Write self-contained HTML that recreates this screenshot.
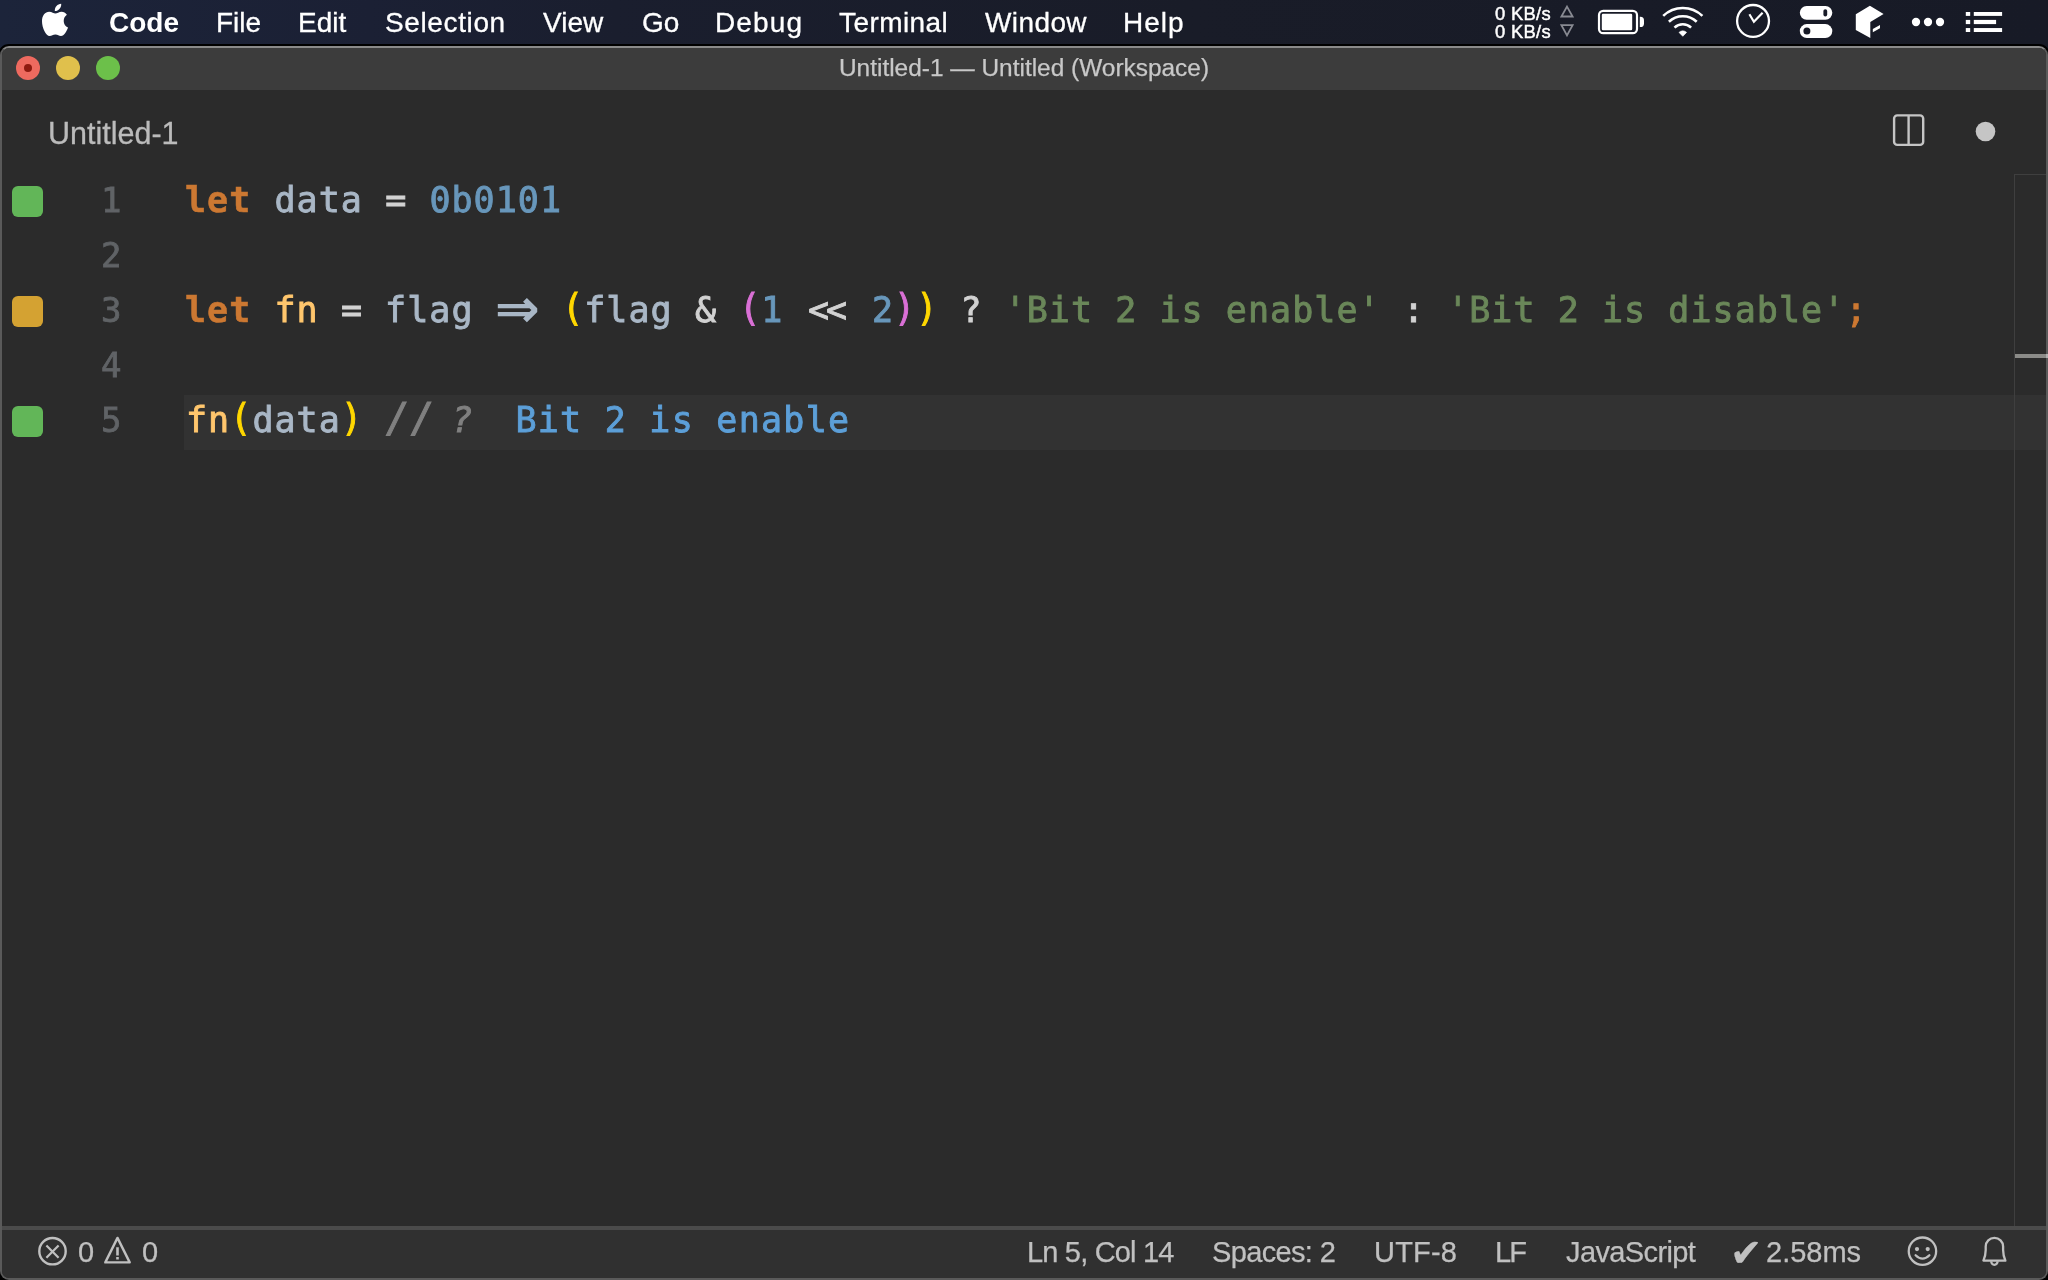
<!DOCTYPE html>
<html lang="en">
<head>
<meta charset="utf-8">
<title>Untitled-1 — Untitled (Workspace)</title>
<style>
html,body{margin:0;padding:0;}
.abs,.mi,.net,#title,#tab,.code,.ln,.st{will-change:transform;}
body{width:2048px;height:1280px;background:#000;overflow:hidden;position:relative;font-family:"Liberation Sans",sans-serif;}
.abs{position:absolute;white-space:nowrap;}
/* ---------- macOS menu bar ---------- */
#menubar{position:absolute;left:0;top:0;width:2048px;height:56px;background:linear-gradient(90deg,#1c243a 0%,#1b2034 18%,#1a1e2e 30%,#191c28 58%,#171a26 100%);}
.mi{position:absolute;top:0;height:44px;line-height:45px;-webkit-text-stroke:0.3px;font-size:28px;color:#fff;white-space:nowrap;}
.mi b{font-weight:700;-webkit-text-stroke:0;}
.net{position:absolute;font-size:18.4px;color:#fff;white-space:nowrap;line-height:20px;letter-spacing:0.3px;-webkit-text-stroke:0.45px;}
/* ---------- window ---------- */
#win{position:absolute;left:0;top:46px;width:2048px;height:1234px;box-sizing:border-box;border:2px solid #5a5a5a;border-top-color:#8a8a8a;border-bottom-color:#5a5a5a;border-radius:9px;background:#2b2b2b;overflow:hidden;box-shadow:0 0 0 2px #000;}
#titlebar{position:absolute;left:0;top:0;width:2044px;height:42px;background:#3c3c3c;}
#statusline{position:absolute;left:0;top:1178px;width:2044px;height:4px;background:#4b4b4b;}
#statusbar{position:absolute;left:0;top:1182px;width:2044px;height:48px;background:#303030;}
.tl{position:absolute;width:24.6px;height:24.6px;border-radius:50%;top:55.6px;}
#title{position:absolute;left:0;top:48px;width:2048px;height:42px;line-height:39px;text-align:center;font-size:24.43px;color:#c8c8c8;-webkit-text-stroke:0.25px;}
#tab{position:absolute;left:48px;top:111px;height:44px;line-height:44px;font-size:30.5px;color:#bbbbbb;-webkit-text-stroke:0.3px;}
/* ---------- editor ---------- */
#hl{position:absolute;left:184px;top:394.5px;width:1862px;height:55.5px;background:#323232;}
#ruler{position:absolute;left:2014px;top:174px;width:32px;height:1052px;border-left:1px solid #3f3f3f;border-top:1px solid #3f3f3f;box-sizing:border-box;}
#rulermark{position:absolute;left:2015px;top:354px;width:31px;height:4px;background:#8b8b88;border-right:2px solid #b0b0b0;}
.sq{position:absolute;left:12px;width:31px;height:31px;border-radius:6px;}
.code{position:absolute;left:185.5px;height:55px;line-height:55px;font-family:"DejaVu Sans Mono","Liberation Mono",monospace;font-size:35px;letter-spacing:1.053px;white-space:pre;color:#a9b7c6;-webkit-text-stroke:0.9px;}
.ln{position:absolute;left:55px;width:66.5px;text-align:right;height:55px;line-height:55px;font-family:"DejaVu Sans Mono","Liberation Mono",monospace;font-size:34px;color:#606366;-webkit-text-stroke:0.8px;}
.kw{color:#cc7832;font-weight:700;-webkit-text-stroke:0.5px;margin-left:-1px;margin-right:1px;}
.fn{color:#ffc66d;}
.op{color:#d2d2d2;}
.num{color:#6897bb;}
.str{color:#6a8759;}
.b1{color:#ffd700;}
.b2{color:#da70d6;}
.b1,.b2{display:inline-block;transform:scaleY(1.09);transform-origin:0 56px;}
.cm{color:#808080;font-style:italic;}
.qk{color:#5c9fd8;margin-left:-2.5px;letter-spacing:1.26px;}
.semi{color:#cc7832;}
.sl{display:inline-block;transform:translateX(1px) scale(1.117,1.16);transform-origin:0 36.75px;}
.lig{display:inline-block;width:44.25px;letter-spacing:0;font-family:"DejaVu Sans",sans-serif;font-weight:700;font-size:53.8px;line-height:0;position:relative;top:5px;left:-1px;-webkit-text-stroke:0;}
.shl{display:inline-block;box-sizing:border-box;width:44.25px;padding-left:2.5px;letter-spacing:-3px;}
/* ---------- status bar ---------- */
.st{position:absolute;top:1229px;height:48px;line-height:46px;font-size:29px;color:#c0c0c0;white-space:nowrap;-webkit-text-stroke:0.25px;}
</style>
</head>
<body>

<!-- ======= menu bar ======= -->
<div id="menubar"></div>
<div class="mi" style="left:109px"><b>Code</b></div>
<div class="mi" style="left:216px">File</div>
<div class="mi" style="left:297.5px">Edit</div>
<div class="mi" style="left:384.5px;letter-spacing:0.62px">Selection</div>
<div class="mi" style="left:543px">View</div>
<div class="mi" style="left:642px">Go</div>
<div class="mi" style="left:715px;letter-spacing:1.15px">Debug</div>
<div class="mi" style="left:839px;letter-spacing:0.43px">Terminal</div>
<div class="mi" style="left:985px;letter-spacing:0.4px">Window</div>
<div class="mi" style="left:1123px;letter-spacing:1px">Help</div>

<div class="net" style="left:1495px;top:4px">0 KB/s</div>
<div class="net" style="left:1495px;top:22px">0 KB/s</div>

<!-- ======= window ======= -->
<div id="win">
  <div id="titlebar"></div>
  <div id="statusline"></div>
  <div id="statusbar"></div>
</div>
<div class="tl" style="left:15.6px;background:#ee6a5f"></div>
<div class="tl" style="left:55.7px;background:#e0c04c"></div>
<div class="tl" style="left:95.8px;background:#6cc04a"></div>
<div class="abs" style="left:24px;top:64px;width:8px;height:8px;border-radius:50%;background:#8e1a10"></div>
<div id="title">Untitled-1 — Untitled (Workspace)</div>
<div id="tab">Untitled-1</div>

<!-- ======= editor ======= -->
<div id="hl"></div>
<div id="ruler"></div>
<div id="rulermark"></div>

<div class="sq" style="top:186px;background:#62b658"></div>
<div class="sq" style="top:296px;background:#d4a232"></div>
<div class="sq" style="top:406px;background:#62b658"></div>

<div class="ln" style="top:172.7px">1</div>
<div class="ln" style="top:227.7px">2</div>
<div class="ln" style="top:282.7px">3</div>
<div class="ln" style="top:337.7px">4</div>
<div class="ln" style="top:392.7px">5</div>

<div class="code" style="top:172.7px"><span class="kw">let</span> data <span class="op">=</span> <span class="num">0b0101</span></div>
<div class="code" style="top:282.7px"><span class="kw">let</span> <span class="fn">fn</span> <span class="op">=</span> flag <span class="lig">⇒</span> <span class="b1">(</span>flag <span class="op">&amp;</span> <span class="b2">(</span><span class="num">1</span> <span class="op shl">&lt;&lt;</span> <span class="num">2</span><span class="b2">)</span><span class="b1">)</span> <span class="op">?</span> <span class="str">'Bit 2 is enable'</span> <span class="op">:</span> <span class="str">'Bit 2 is disable'</span><span class="semi">;</span></div>
<div class="code" style="top:392.7px"><span class="fn">fn</span><span class="b1">(</span>data<span class="b1">)</span> <span class="cm"><span class="sl">//</span> ?</span>  <span class="qk">Bit 2 is enable</span></div>

<!-- ======= status bar ======= -->
<div class="st" style="left:78px">0</div>
<div class="st" style="left:142px">0</div>
<div class="st" style="left:1027px;letter-spacing:-0.82px">Ln 5, Col 14</div>
<div class="st" style="left:1211.5px;letter-spacing:-0.65px">Spaces: 2</div>
<div class="st" style="left:1374px;letter-spacing:0.2px">UTF-8</div>
<div class="st" style="left:1494.500px;letter-spacing:-2px">LF</div>
<div class="st" style="left:1565.500px;letter-spacing:-0.62px">JavaScript</div>
<div class="st" style="left:1730.1px;top:1229.7px;font-size:38.5px;font-family:'DejaVu Sans',sans-serif">✔</div>
<div class="st" style="left:1765.500px">2.58ms</div>


<!-- ======= icon overlay (page coordinates) ======= -->
<svg class="abs" style="left:0;top:0" width="2048" height="1280" viewBox="0 0 2048 1280">
 <!-- apple -->
 <g transform="translate(42 3.6)" fill="#fff">
  <path d="M13.4 9.9C11.8 9.9 9.8 8.1 7.2 8.1C3.2 8.1 0 11.8 0 17.7C0 24.5 4.2 32.5 7.6 32.5C9.8 32.5 10.8 30.9 13.4 30.9C16 30.9 16.7 32.5 19 32.5C22 32.5 25.2 26.8 26 23.9C23.3 22.8 21.7 20.3 21.7 17.4C21.7 14.8 23 12.5 24.9 11.2C23.6 9.3 21.6 8.1 19.6 8.1C17 8.1 15 9.9 13.4 9.9Z"/>
  <path d="M12.8 7.5C12.5 3.5 15.5 0.3 19.2 0.1C19.6 3.9 16.6 7.4 12.8 7.5Z"/>
 </g>
 <!-- net triangles -->
 <path d="M1567 6.6L1572.6 16.5L1561.4 16.5Z" fill="none" stroke="#888a92" stroke-width="1.8"/>
 <path d="M1567 35.4L1572.6 25.2L1561.4 25.2Z" fill="none" stroke="#888a92" stroke-width="1.8"/>
 <!-- battery -->
 <rect x="1599" y="10.9" width="38" height="22.3" rx="4.2" fill="none" stroke="#fff" stroke-width="2.2"/>
 <rect x="1601.8" y="13.7" width="30.4" height="16.5" rx="1.2" fill="#fff"/>
 <path d="M1639.8 16.8h0.6a3.6 3.6 0 0 1 3.6 3.6v3a3.6 3.6 0 0 1 -3.6 3.600h-0.600z" fill="#fff"/>
 <!-- wifi -->
 <g fill="none" stroke="#fff" stroke-width="2.6">
  <path d="M1663.200 15.900A28.200 28.200 0 0 1 1702.400 15.900"/>
  <path d="M1668.900 21.800A20 20 0 0 1 1696.700 21.800"/>
  <path d="M1674.500 27.600A12 12 0 0 1 1691.100 27.600"/>
 </g>
 <path d="M1682.800 36.300L1679 32.400A5.400 5.400 0 0 1 1686.600 32.400Z" fill="#fff" stroke="#fff" stroke-width="0.6" stroke-linejoin="round"/>
 <!-- clock -->
 <circle cx="1753.050" cy="20.950" r="15.950" fill="none" stroke="#fff" stroke-width="2.300"/>
 <path d="M1749.400 14.300L1753.900 21.800L1762.600 12.700" fill="none" stroke="#fff" stroke-width="2.200"/>
 <!-- toggles -->
 <rect x="1799.800" y="6" width="32.500" height="13.700" rx="6.850" fill="#fff"/>
 <rect x="1823.400" y="9.200" width="3.800" height="7.300" rx="1.900" fill="#171a27"/>
 <rect x="1799.800" y="24.100" width="32.500" height="14" rx="7" fill="#fff"/>
 <circle cx="1806.900" cy="30.900" r="3.500" fill="#171a27"/>
 <!-- cube -->
 <path d="M1869.900 5.800L1883.600 14.100L1870.300 22L1870.300 38L1855.800 29.900L1855.800 14.300Z" fill="#fff"/>
 <path d="M1872.800 29.050L1880 24.900L1880 28.200L1872.800 32.200Z" fill="#fff"/>
 <!-- dots -->
 <circle cx="1916" cy="22" r="4.150" fill="#fff"/><circle cx="1928" cy="22" r="4.150" fill="#fff"/><circle cx="1940" cy="22" r="4.150" fill="#fff"/>
 <!-- list -->
 <g fill="#fff">
  <rect x="1965.800" y="12" width="4.400" height="3.900"/><rect x="1973.800" y="12" width="28.300" height="3.900"/>
  <rect x="1965.800" y="19.900" width="4.400" height="4.200"/><rect x="1973.800" y="19.900" width="22.300" height="4.200"/>
  <rect x="1965.800" y="28.050" width="4.400" height="3.950"/><rect x="1973.800" y="28.050" width="28.300" height="3.950"/>
 </g>
 <!-- tab actions -->
 <rect x="1894.100" y="115.400" width="29.100" height="29.500" rx="3.200" fill="none" stroke="#c5c5c5" stroke-width="2.400"/>
 <path d="M1908.600 115.400V144.900" stroke="#c5c5c5" stroke-width="2.400"/>
 <circle cx="1985.500" cy="131.500" r="9.800" fill="#c5c5c5"/>
 <!-- status: error / warning -->
 <g fill="none" stroke="#c0c0c0" stroke-width="2.400">
  <circle cx="52.500" cy="1251.200" r="13.200"/>
  <path d="M46.400 1245.400L58.600 1257.800M58.600 1245.400L46.400 1257.800" stroke-width="2.200"/>
  <path d="M117.500 1237.900L129.700 1262.400L105.300 1262.400Z" stroke-linejoin="round"/>
  <path d="M117.500 1247.300V1255.600M117.500 1257V1259.500" stroke-width="2.600"/>
 </g>
 <!-- status: smiley / bell -->
 <g fill="none" stroke="#c0c0c0" stroke-width="2.300">
  <circle cx="1922.450" cy="1251.200" r="13.700"/>
  <path d="M1915.600 1255.200Q1922.500 1262 1929.400 1255.200" stroke-linecap="round"/>
  <path d="M1983.400 1260.600C1985 1257 1985.700 1254 1985.700 1250L1985.700 1246.500A8.700 8.700 0 0 1 2003.100 1246.500L2003.100 1250C2003.100 1254 2003.800 1257 2005.400 1260.600Z" stroke-linejoin="round"/>
  <path d="M1991.200 1261.200A3.200 3.700 0 0 0 1997.600 1261.200"/>
 </g>
 <circle cx="1917" cy="1249.100" r="2.100" fill="#c0c0c0"/><circle cx="1927.700" cy="1249.100" r="2.100" fill="#c0c0c0"/>
</svg>

</body>
</html>
